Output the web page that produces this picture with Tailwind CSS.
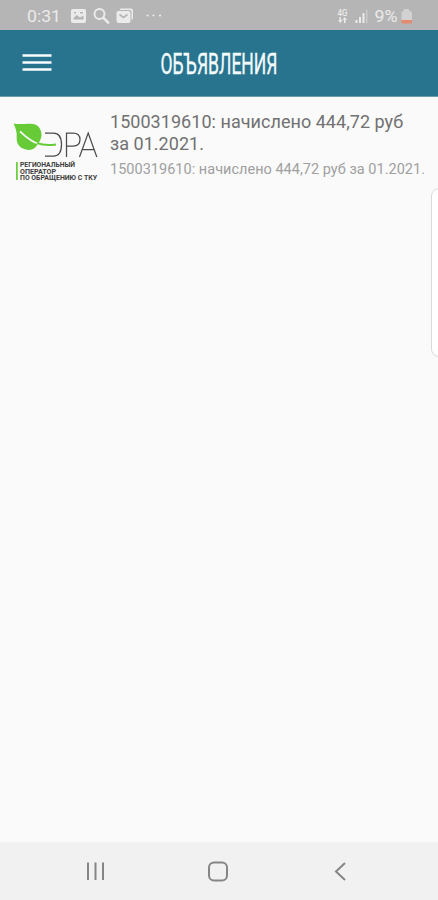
<!DOCTYPE html>
<html lang="ru">
<head>
<meta charset="utf-8">
<title>Объявления</title>
<script src="https://cdn.jsdelivr.net/npm/@tailwindcss/browser@4"></script>
</head>
<body class="bg-[#fafafa] font-[Roboto,sans-serif]">
<div class="flex flex-col w-[438px] h-[900px] overflow-hidden relative">
  <header class="shrink-0">
    <div class="flex h-[30px] bg-[#b5b5b5]">
      <svg class="w-[438px] h-[30px]" viewBox="0 0 438 30" font-family="Roboto, sans-serif" fill="#ebebeb">
        <text x="27" y="22" font-size="16.5" textLength="34" lengthAdjust="spacingAndGlyphs">0:31</text>
        <path fill-rule="evenodd" d="M73 9h11a2 2 0 0 1 2 2v10a2 2 0 0 1-2 2H73a2 2 0 0 1-2-2V11a2 2 0 0 1 2-2zM73.500 19.500h10v-4l-3.500 2-3.500-2.500-3 3zM74 12v1.500h2V12zM80 12v1.500h3V12z"/>
        <circle cx="99.500" cy="14" r="5" fill="none" stroke="#ebebeb" stroke-width="2"/>
        <path d="M103.200 17.600l5 5" stroke="#ebebeb" stroke-width="2.600" stroke-linecap="round"/>
        <path d="M121 8.500h10a2 2 0 0 1 2 2v7.500a2 2 0 0 1-1.500 2v-8a2 2 0 0 0-2-2h-10a2 2 0 0 1 1.500-1.500z"/>
        <rect x="116.500" y="11" width="14" height="12" rx="2"/>
        <path d="M119.500 14.500l4 3 4-3" fill="none" stroke="#b5b5b5" stroke-width="1.600"/>
        <circle cx="147.500" cy="15.500" r="1.100"/><circle cx="153.500" cy="15.500" r="1.100"/><circle cx="160" cy="15.500" r="1.100"/>
        <text x="337.500" y="15.500" font-size="9" font-weight="500" textLength="10" lengthAdjust="spacingAndGlyphs">4G</text>
        <path d="M339.500 17h1.500v3h1.500l-2.250 3-2.250-3h1.500zM344 23h1.500v-3h1.500l-2.250-3-2.250 3H344z"/>
        <path d="M355.500 20h2v3h-2zM359 17h2v6h-2zM362.500 13h2v10h-2z"/>
        <path d="M366 10h1.500v13H366z" fill="#cbcbcb"/>
        <text x="374.500" y="22" font-size="17" textLength="23" lengthAdjust="spacingAndGlyphs">9%</text>
        <path d="M404 9h5v2h1a2 2 0 0 1 2 2v7h-10.500v-7a2 2 0 0 1 2-2h.5z" fill="#d2d2d2"/>
        <path d="M401.500 20H412v2a1.500 1.500 0 0 1-1.500 1.500H403a1.500 1.500 0 0 1-1.500-1.500z" fill="#e58a6c"/>
      </svg>
    </div>
    <div class="flex h-[67px] bg-[#28748e] border-b border-[#6b9dae]">
      <svg class="w-[438px] h-[66px]" viewBox="0 30 438 66">
        <path d="M22.500 55.500h29M22.500 62.500h29M22.500 69.500h29" stroke="#f7fdfe" stroke-width="2.600"/>
        <text x="160.500" y="73.800" font-family="Roboto, sans-serif" font-size="29" fill="#f4fbfd" stroke="#f4fbfd" stroke-width="0.400" textLength="117" lengthAdjust="spacingAndGlyphs">ОБЪЯВЛЕНИЯ</text>
      </svg>
    </div>
  </header>

  <main class="flex-1 relative">
    <article class="flex">
      <svg class="w-[110px] h-[93px] shrink-0" viewBox="0 97 110 93" font-family="Roboto, sans-serif">
        <path d="M13.500 123.500c7 1.500 13-.5 19.500 .5 6.500 1 8.500 6.500 8.500 11.500-.5 4-2 6.500-4 9-2.500 4.500-6 6.500-12.500 4.800-5.500-1.300-8.800-5.800-8.300-12 .4-5-1.200-10-3.200-13.800z" fill="#67cb38"/>
        <path d="M20 131.500c5 4.500 9 8.500 15 11 3 1 5 1.500 7 1.500" fill="none" stroke="#fafafa" stroke-width="1.700"/>
        <path d="M37 143c6 2.500 12 2.500 19 1.500" fill="none" stroke="#67cb38" stroke-width="1.900"/>
        <g fill="none" stroke="#4c4c4c" stroke-width="1.250">
          <path d="M45 133h8.500c5.500 0 8 4 8 11.500s-3 11.500-8 11.500H45"/>
          <path d="M66.500 157v-24h6.500c5 0 7 2.500 7 6.500s-2 6.500-7 6.500h-6.500"/>
          <path d="M79.500 157l8.700-24L96.800 157M82.500 149.500h11.700"/>
        </g>
        <path d="M16.900 162v18" stroke="#67cb38" stroke-width="1.700"/>
        <g font-size="6.300" font-weight="700" fill="#3c3c3c">
          <text x="20" y="167.200" textLength="55" lengthAdjust="spacingAndGlyphs">РЕГИОНАЛЬНЫЙ</text>
          <text x="20" y="173.700" textLength="36" lengthAdjust="spacingAndGlyphs">ОПЕРАТОР</text>
          <text x="20" y="180" textLength="77" lengthAdjust="spacingAndGlyphs">ПО ОБРАЩЕНИЮ С ТКУ</text>
        </g>
      </svg>
      <div class="pt-[14px] whitespace-nowrap">
        <h2 class="text-[18px] leading-[21.500px] tracking-[0.040px] text-[#717171]">1500319610: начислено 444,72 руб<br>за 01.2021.</h2>
        <p class="mt-[7px] text-[14.500px] leading-[18px] tracking-[0.020px] text-[#a0a0a0]">1500319610: начислено 444,72 руб за 01.2021.</p>
      </div>
    </article>
    <div class="absolute left-[431px] top-[91px] w-[20px] h-[169px] rounded-[8px] border-[1.500px] border-[#dadada] bg-white"></div>
  </main>

  <nav class="shrink-0 h-[58px] bg-[#f1f1f1]">
    <svg class="w-[438px] h-[58px]" viewBox="0 842 438 58" fill="none" stroke="#858585" stroke-width="2">
      <path d="M88 862.500v17.500M95.500 862.500v17.500M103 862.500v17.500"/>
      <rect x="209" y="862.500" width="18" height="18" rx="5"/>
      <path d="M345 863l-9 8.500 9 8.500"/>
    </svg>
  </nav>
</div>
</body>
</html>
